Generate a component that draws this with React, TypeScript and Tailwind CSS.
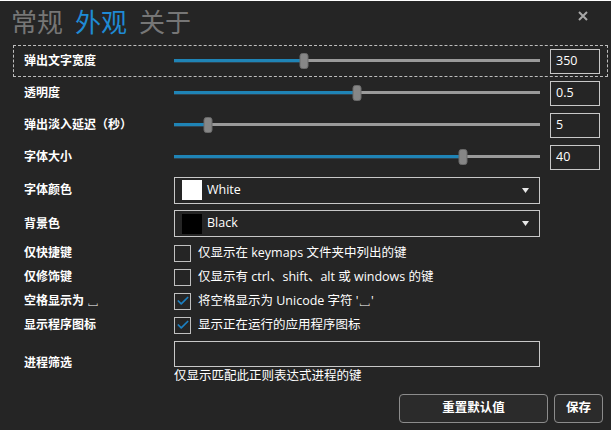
import { Check } from 'lucide-react'

const font = { fontFamily: '"Open Sans", "Noto Sans CJK SC", sans-serif' }

function Slider({ pct }: { pct: number }) {
  return (
    <div className="relative w-[366px] shrink-0 h-[16px] flex items-center">
      <div className="absolute left-0 right-0 top-[6px] h-[3px] bg-[#9a9a9a]" />
      <div
        className="absolute left-0 top-[6px] h-[3px] bg-[#1f84b6] border-b border-[#2f4350] box-content"
        style={{ width: `${pct}%` }}
      />
      <div
        className="absolute top-0 w-[9px] h-[16px] rounded-[3px] bg-[#868686] border border-[#6a6a6a] -translate-x-1/2"
        style={{ left: `${pct}%` }}
      />
    </div>
  )
}

function NumBox({ value }: { value: string }) {
  return (
    <div className="w-[50px] h-[25px] border border-[#c8c8c8] flex items-center pl-[5px] text-[12.5px] text-white">
      {value}
    </div>
  )
}

function SliderRow({ label, pct, value, focused }: { label: string; pct: number; value: string; focused?: boolean }) {
  return (
    <div
      className={
        'h-[32px] flex items-center pl-[10px] pr-[7px] ' +
        (focused ? 'border border-dashed border-[#bdbdbd]' : 'border border-transparent')
      }
    >
      <div className="w-[150px] shrink-0 text-[12px] font-bold text-white">{label}</div>
      <Slider pct={pct} />
      <div className="ml-[10px] shrink-0">
        <NumBox value={value} />
      </div>
    </div>
  )
}

function ColorRow({ label, swatch, name, h }: { label: string; swatch: string; name: string; h: string }) {
  return (
    <div className={'flex items-center pl-[10px] border border-transparent ' + h}>
      <div className="w-[150px] shrink-0 text-[12px] font-bold text-white">{label}</div>
      <div className="w-[366px] shrink-0 h-[27px] border border-[#c8c8c8] flex items-center pl-[7px] pr-[10px]">
        <div className={'w-[20px] h-[20px] ' + swatch} />
        <span className="ml-[5px] text-[12.5px] text-white">{name}</span>
        <svg className="ml-auto" width="7" height="5" viewBox="0 0 7 5">
          <path d="M0 0 H7 L3.5 5 Z" fill="#e8e8e8" />
        </svg>
      </div>
    </div>
  )
}

function CheckRow({ label, text, checked }: { label: string; text: string; checked?: boolean }) {
  return (
    <div className="h-[24px] flex items-center pl-[10px] border border-transparent">
      <div className="w-[150px] shrink-0 text-[12px] font-bold text-white whitespace-pre">{label}</div>
      <div className="w-[17px] h-[17px] border border-[#c0c0c0] flex items-center justify-center">
        {checked && <Check size={14} strokeWidth={3} color="#1c7fc0" />}
      </div>
      <span className="ml-[7px] text-[12.5px] text-white">{text}</span>
    </div>
  )
}

export default function App() {
  return (
    <div className="w-[611px] h-[430px] bg-[#252525] border-t border-white relative overflow-hidden" style={font}>
      <div className="h-[44px] flex items-center gap-[12px] pl-[11px] pb-[3px] text-[26px] leading-none">
        <span className="text-[#767676]">常规</span>
        <span className="text-[#1f8ad4]">外观</span>
        <span className="text-[#767676]">关于</span>
      </div>
      <svg className="absolute left-[578px] top-[10px]" width="10" height="10" viewBox="0 0 10 10">
        <path d="M1 1 L9 9 M9 1 L1 9" stroke="#a8a8a8" strokeWidth="2" />
      </svg>

      <div className="pl-[13px] pr-[3px]">
        <SliderRow label="弹出文字宽度" pct={35.5} value="350" focused />
        <SliderRow label="透明度" pct={50} value="0.5" />
        <SliderRow label="弹出淡入延迟（秒）" pct={9.3} value="5" />
        <SliderRow label="字体大小" pct={79} value="40" />
        <ColorRow label="字体颜色" swatch="bg-white" name="White" h="h-[34px]" />
        <ColorRow label="背景色" swatch="bg-black" name="Black" h="h-[33px]" />
        <div className="h-[1px]" />
        <CheckRow label="仅快捷键" text="仅显示在 keymaps 文件夹中列出的键" />
        <CheckRow label="仅修饰键" text="仅显示有 ctrl、shift、alt 或 windows 的键" />
        <CheckRow label="空格显示为 ␣" text="将空格显示为 Unicode 字符 '␣'" checked />
        <CheckRow label="显示程序图标" text="显示正在运行的应用程序图标" checked />

        <div className="mt-[3px] flex pl-[10px] border border-transparent">
          <div className="w-[150px] shrink-0 pt-[13px] text-[12px] font-bold text-white">进程筛选</div>
          <div className="flex flex-col">
            <div className="w-[366px] h-[26px] border border-[#c8c8c8]" />
            <span className="mt-[1px] text-[12.5px] text-white leading-[16px]">仅显示匹配此正则表达式进程的键</span>
          </div>
        </div>
      </div>

      <div className="absolute right-[8px] bottom-[7px] flex gap-[6px]">
        <button className="w-[149px] h-[29px] rounded-[4px] border border-[#8c8c8c] bg-[#2b2b2b] text-white text-[12.5px] font-bold">
          重置默认值
        </button>
        <button className="w-[49px] h-[29px] rounded-[4px] border border-[#8c8c8c] bg-[#2b2b2b] text-white text-[12.5px] font-bold">
          保存
        </button>
      </div>
    </div>
  )
}
